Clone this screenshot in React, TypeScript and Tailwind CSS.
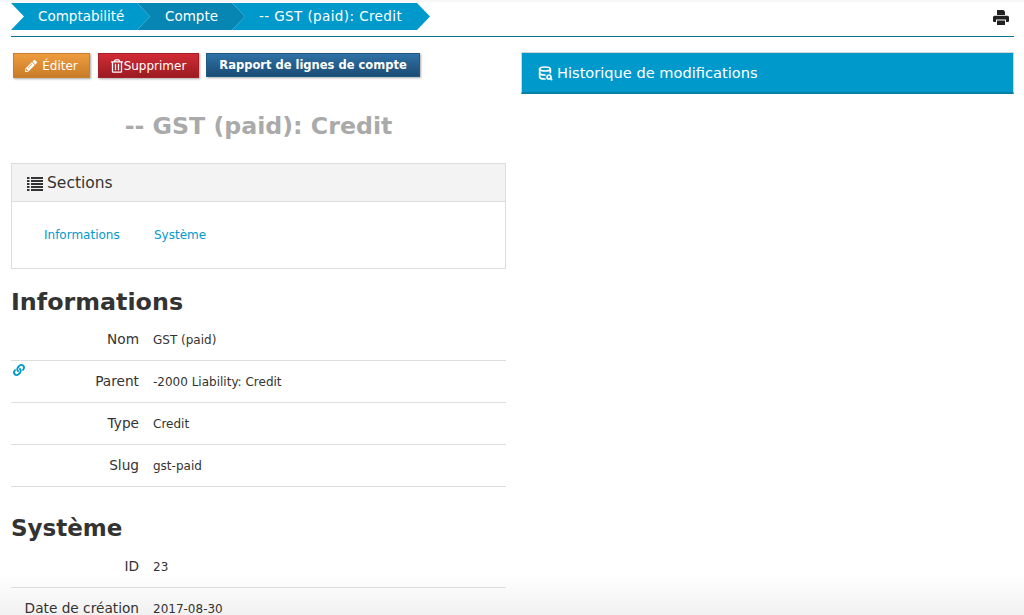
import { FaLink, FaPencilAlt, FaRegTrashAlt } from 'react-icons/fa'
import { TbDatabaseSearch } from 'react-icons/tb'

const font = { fontFamily: '"DejaVu Sans", Verdana, sans-serif' }

function ListIcon() {
  return (
    <svg width="16" height="14" viewBox="0 0 16 14" fill="#333">
      {[0, 3, 6, 9, 12].map((y) => (
        <g key={y}>
          <rect x="0" y={y} width="2.5" height="2" />
          <rect x="4" y={y} width="12" height="2" />
        </g>
      ))}
    </svg>
  )
}

function PrintIcon() {
  return (
    <svg width="16" height="15" viewBox="0 0 16 15" fill="#222" className="mr-[5px] mt-[7px]">
      <path d="M4 0h6.5L12 1.5V5H4z" />
      <path d="M1.5 5.8h13A1.5 1.5 0 0 1 16 7.3V11a1 1 0 0 1-1 1h-2V9.5H3V12H1a1 1 0 0 1-1-1V7.3a1.5 1.5 0 0 1 1.5-1.5z" />
      <path d="M4 10.5h8V15H4z" />
    </svg>
  )
}

function Row({ label, value }: { label: string; value: string }) {
  return (
    <div className="flex h-[42px] items-center border-b border-[#ddd]">
      <div className="w-[128px] text-right text-[13.7px] text-[#333] whitespace-nowrap">{label}</div>
      <div className="ml-[14px] text-[12px] text-[#333]">{value}</div>
    </div>
  )
}

export default function App() {
  return (
    <div className="relative h-[615px] w-[1024px] overflow-hidden bg-white border-t-2 border-[#f7f7f7]" style={font}>
      {/* Bottom fade behind the page */}
      <div className="absolute inset-x-0 bottom-0 h-[40px] bg-gradient-to-b from-transparent to-[#f1f1f1]" />

      <div className="relative pl-[11px] pr-[10px]">
        {/* Breadcrumb */}
        <div className="flex h-[35px] items-start justify-between border-b border-[#0a7199] pt-[1px]">
          <div className="flex h-[27px] text-[13.5px] text-white">
            <div className="relative z-30 flex w-[139px] items-center bg-[#0099cc] pl-[27px] [clip-path:polygon(0_0,126px_0,139px_50%,126px_100%,0_100%,13px_50%)]">
              Comptabilité
            </div>
            <div className="relative z-20 -ml-[13px] flex w-[108px] items-center bg-[#0786b3] pl-[28px] [clip-path:polygon(0_0,95px_0,108px_50%,95px_100%,0_100%,13px_50%)]">
              Compte
            </div>
            <div className="relative z-10 -ml-[13px] flex w-[198px] items-center bg-[#0099cc] pl-[27px] tracking-[0.4px] [clip-path:polygon(0_0,185px_0,198px_50%,185px_100%,0_100%,13px_50%)]">
              -- GST (paid): Credit
            </div>
          </div>
          <PrintIcon />
        </div>

        <div className="mt-[15px] flex gap-[15px]">
          {/* Left column */}
          <div className="w-[495px]">
            <div className="flex items-start pl-[2px] pt-[1px] text-[12px] text-white">
              <button className="flex h-[25px] w-[77px] items-center justify-center gap-[5px] border border-[#c8802f] bg-gradient-to-b from-[#ee9c3e] to-[#c97c28] shadow-[1px_1px_2px_rgba(0,0,0,0.35)]">
                <FaPencilAlt className="h-[12px] w-[12px]" />
                Éditer
              </button>
              <button className="ml-[8px] flex h-[25px] w-[101px] items-center justify-center gap-[1px] border border-[#a52028] bg-gradient-to-b from-[#d12c35] to-[#9c1b22] shadow-[1px_1px_2px_rgba(0,0,0,0.35)]">
                <FaRegTrashAlt className="h-[14px] w-[12px]" />
                Supprimer
              </button>
              <button className="ml-[7px] flex h-[24px] w-[214px] items-center justify-center border border-[#1f5a85] bg-gradient-to-b from-[#2f72a6] to-[#1b4c74] pt-[2px] text-[11.5px] font-bold shadow-[1px_1px_2px_rgba(0,0,0,0.35)]">
                Rapport de lignes de compte
              </button>
            </div>

            <h1 className="mt-[33px] text-center text-[23.7px] leading-[30px] font-bold text-[#aaaaaa]">-- GST (paid): Credit</h1>

            {/* Sections panel */}
            <div className="mt-[22px] border border-[#ddd]">
              <div className="flex h-[38px] items-center gap-[4px] border-b border-[#ddd] bg-[#f3f3f3] pl-[15px] pt-[2px] text-[15.5px] text-[#333]">
                <ListIcon />
                Sections
              </div>
              <div className="flex h-[66px] items-center pl-[32px] text-[12px] text-[#0099cc]">
                <span className="w-[110px]">Informations</span>
                <span>Système</span>
              </div>
            </div>

            <h2 className="mt-[18px] text-[23.8px] leading-[30px] font-bold text-[#333]">Informations</h2>
            <div className="relative mt-[2px]">
              <Row label="Nom" value="GST (paid)" />
              <Row label="Parent" value="-2000 Liability: Credit" />
              <Row label="Type" value="Credit" />
              <Row label="Slug" value="gst-paid" />
              <FaLink className="absolute left-[2px] top-[45px] h-[12px] w-[12px] text-[#0099cc]" />
            </div>

            <h2 className="mt-[26px] text-[23px] leading-[30px] font-bold text-[#333]">Système</h2>
            <div className="mt-[3px]">
              <Row label="ID" value="23" />
              <Row label="Date de création" value="2017-08-30" />
            </div>
          </div>

          {/* Right column */}
          <div className="flex-1">
            <div className="flex h-[42px] items-center gap-[4px] border border-[#d5d5d5] border-b-2 border-b-[#0780a8] bg-[#0099cc] pl-[15px] text-[14.6px] text-white">
              <TbDatabaseSearch className="h-[16px] w-[16px]" strokeWidth={2.6} />
              Historique de modifications
            </div>
          </div>
        </div>
      </div>
    </div>
  )
}
